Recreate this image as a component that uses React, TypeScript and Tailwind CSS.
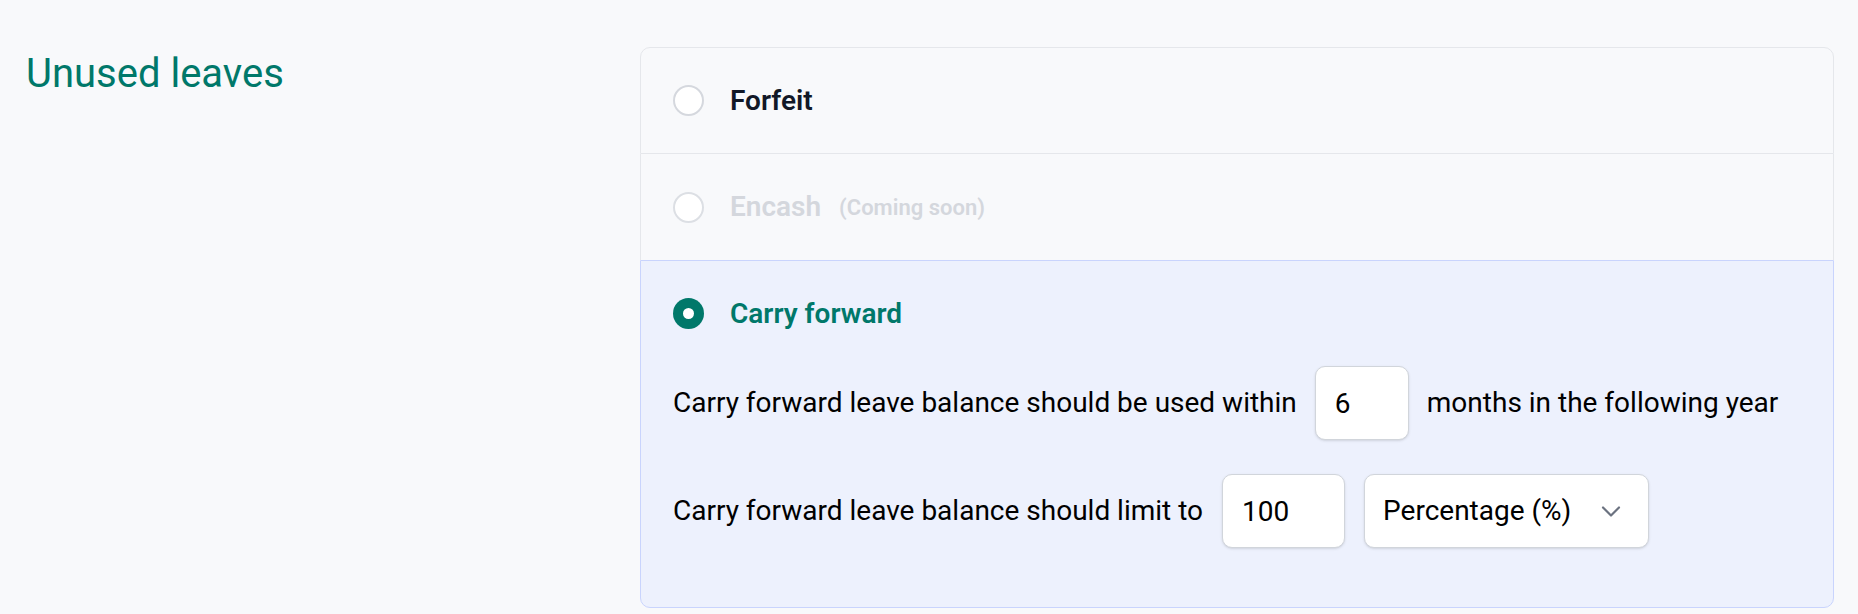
import React from 'react';

const font = { fontFamily: 'Roboto, "Liberation Sans", sans-serif' };

function Radio({ checked = false, disabled = false }: { checked?: boolean; disabled?: boolean }) {
  if (checked) {
    return (
      <span className="flex h-[31px] w-[31px] shrink-0 items-center justify-center rounded-full bg-[#00786a]">
        <span className="h-[11px] w-[11px] rounded-full bg-white" />
      </span>
    );
  }
  return (
    <span
      className={`h-[31px] w-[31px] shrink-0 rounded-full border-2 bg-white ${
        disabled ? 'border-[#dcdfe4]' : 'border-[#d5d8de]'
      }`}
    />
  );
}

function Box({ value, width }: { value: string; width: string }) {
  return (
    <input
      readOnly
      value={value}
      className={`${width} h-[74px] rounded-[10px] border border-[#d1d5db] bg-white pl-[19px] text-[28px] text-black shadow-sm outline-none`}
      style={font}
    />
  );
}

export default function App() {
  return (
    <div className="min-h-[614px] w-full bg-[#f8f9fb]" style={font}>
      <div className="grid grid-cols-[614px_1fr] pl-[26px] pr-[24px] pt-[47px]">
        <h2 className="mt-[3px] text-[40px] leading-[48px] text-[#00786a]">Unused leaves</h2>

        <div className="flex flex-col">
          {/* Forfeit */}
          <label className="flex h-[107px] items-center gap-[26px] rounded-t-[10px] border border-[#e5e7eb] px-[32px]">
            <Radio />
            <span className="text-[28px] font-semibold text-[#111827]">Forfeit</span>
          </label>

          {/* Encash */}
          <label className="flex h-[106px] items-center gap-[26px] border-x border-[#e5e7eb] px-[32px]">
            <Radio disabled />
            <span className="text-[28px] font-semibold text-[#d4d7dd]">Encash</span>
            <span className="-ml-[8px] text-[22px] font-semibold text-[#d4d7dd]">(Coming soon)</span>
          </label>

          {/* Carry forward */}
          <div className="rounded-b-[10px] border border-[#c9d4fd] bg-[#edf1fd] px-[32px] pb-[59px] pt-[37px]">
            <label className="flex h-[31px] items-center gap-[26px]">
              <Radio checked />
              <span className="text-[28px] font-semibold text-[#00786a]">Carry forward</span>
            </label>

            <div className="mt-[37px] flex items-center gap-[18px] text-[28px] text-black">
              <span>Carry forward leave balance should be used within</span>
              <Box value="6" width="w-[94px]" />
              <span>months in the following year</span>
            </div>

            <div className="mt-[34px] flex items-center gap-[19px] text-[28px] text-black">
              <span>Carry forward leave balance should limit to</span>
              <Box value="100" width="w-[123px]" />
              <div className="flex h-[74px] w-[285px] items-center justify-between rounded-[10px] border border-[#d1d5db] bg-white pl-[18px] pr-[27px] shadow-sm">
                <span>Percentage (%)</span>
                <svg width="20" height="11" viewBox="0 0 20 11" fill="none">
                  <path d="M2 1.5l8 8 8-8" stroke="#6b7280" strokeWidth="2.2" strokeLinecap="round" strokeLinejoin="round" />
                </svg>
              </div>
            </div>
          </div>
        </div>
      </div>
    </div>
  );
}
